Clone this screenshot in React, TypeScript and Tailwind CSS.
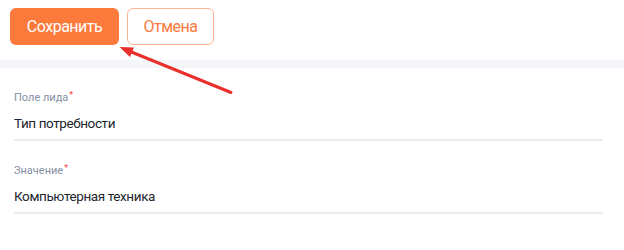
import React from 'react';

const fields = [
  { label: 'Поле лида', value: 'Тип потребности' },
  { label: 'Значение', value: 'Компьютерная техника' },
];

const App: React.FC = () => {
  return (
    <div className="relative w-[624px] h-[250px] overflow-hidden bg-white font-['Roboto','Liberation_Sans',sans-serif]">
      {/* Toolbar */}
      <div className="flex items-start gap-2 h-[60px] pt-2 pl-[10px]">
        <button className="h-[37px] w-[109px] rounded-md bg-[#fc7a3b] text-white text-[16px] tracking-[-0.5px] leading-none">
          Сохранить
        </button>
        <button className="h-[37px] w-[87px] rounded-md border border-[#fdb391] bg-white text-[#fa7a3d] text-[16px] tracking-[-0.5px] leading-none">
          Отмена
        </button>
      </div>

      <div className="h-2 bg-[#f4f6fa]"></div>

      {/* Form */}
      <div className="pl-[14px] pr-[21px] pt-[23px] flex flex-col gap-[23px]">
        {fields.map((f) => (
          <div key={f.label} className="border-b-2 border-[#ededed] pb-[6px]">
            <div className="text-[11px] leading-[14px] text-[#858fa3]">
              {f.label}
              <span className="text-[#f2463c] text-[9px] relative -top-[3px] ml-[1px]">*</span>
            </div>
            <div className="mt-[8px] text-[13.5px] tracking-[-0.4px] leading-[20px] text-[#22262c]">{f.value}</div>
          </div>
        ))}
      </div>

      {/* Annotation arrow */}
      <svg className="absolute left-0 top-0 pointer-events-none" width="624" height="250" viewBox="0 0 624 250">
        <line x1="231" y1="92.5" x2="129" y2="51" stroke="#e8302c" strokeWidth="3" strokeLinecap="round" />
        <polygon points="119.5,47 134,47.5 130,57" fill="#e8302c" />
      </svg>
    </div>
  );
};

export default App;
